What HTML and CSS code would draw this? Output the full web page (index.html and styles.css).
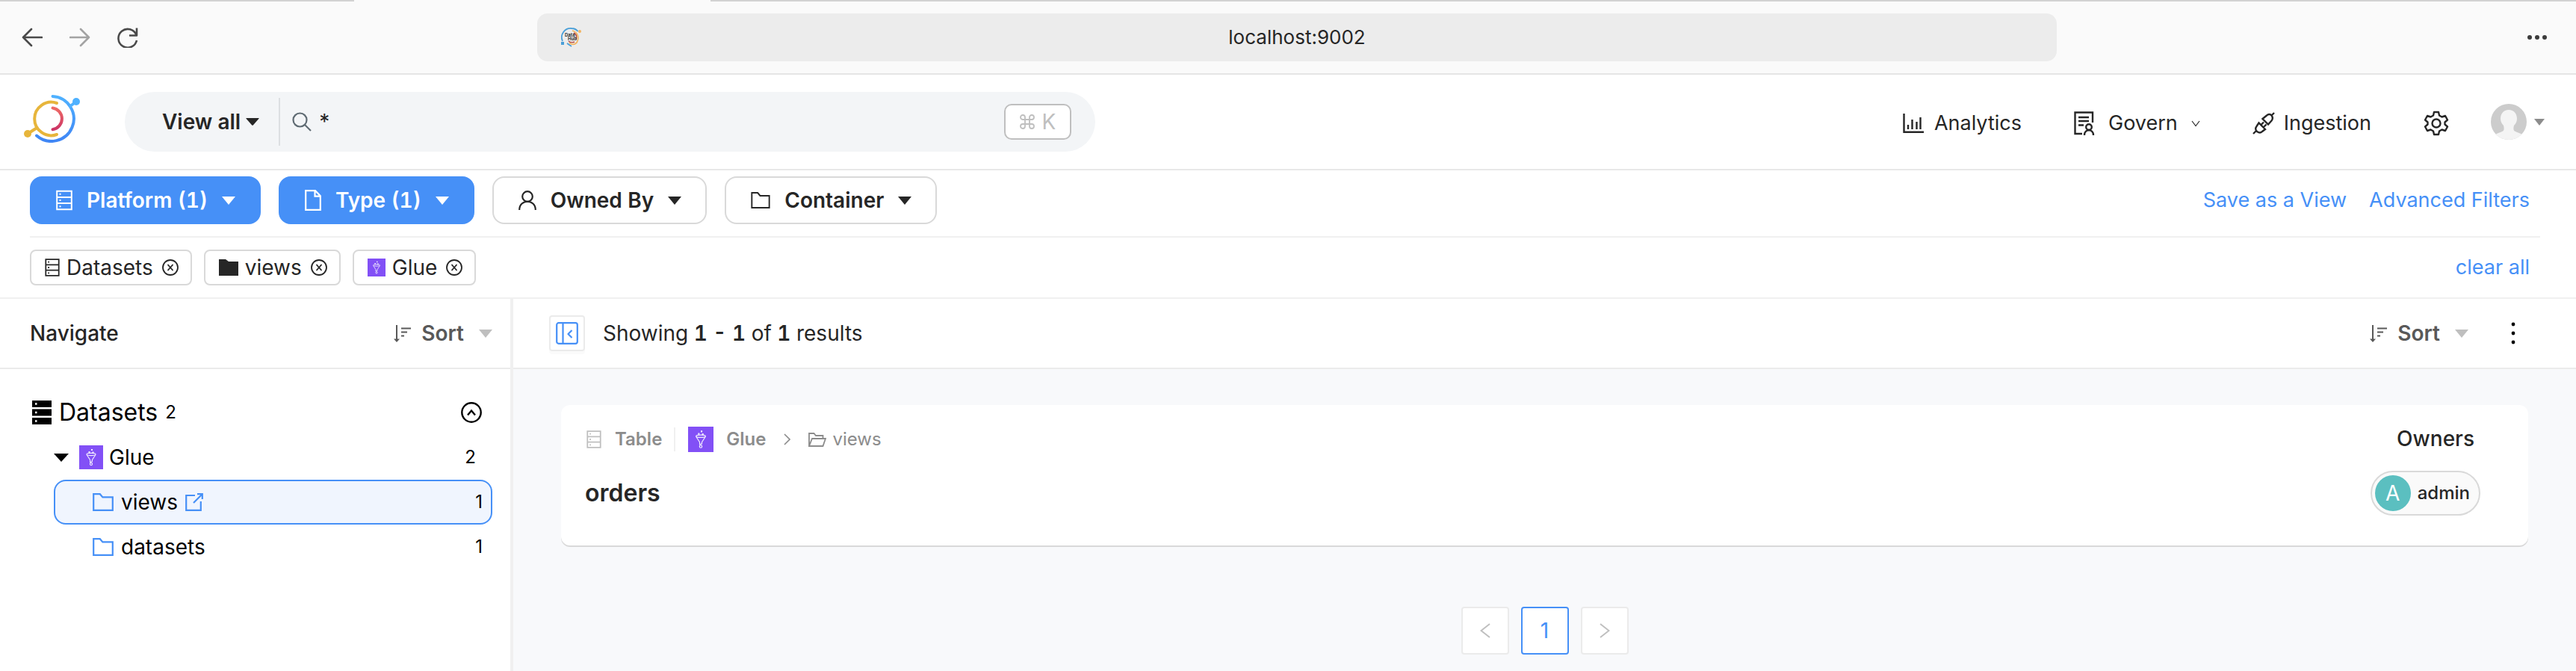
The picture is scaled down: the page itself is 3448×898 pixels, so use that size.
FILE: index.html
```html
<!DOCTYPE html>
<html lang="en">
<head>
<meta charset="utf-8">
<title>DataHub</title>
<link rel="stylesheet" href="styles.css">
</head>
<body>
<svg class="sprite" aria-hidden="true">
  <symbol id="caret" viewBox="0 0 18 11"><path d="M0 0h18L9 11z" fill="currentColor"/></symbol>
  <symbol id="db" viewBox="0 0 22 27"><path d="M1.2 1.2h19.6v24.6H1.2zM1.2 9.4h19.6M1.2 17.6h19.6" fill="none" stroke="currentColor" stroke-width="2"/><path d="M4.5 4.3h2v2h-2zM4.5 12.5h2v2h-2zM4.5 20.7h2v2h-2z" fill="currentColor"/></symbol>
  <symbol id="folder" viewBox="0 0 28 24"><path d="M1.2 1.2h8.6l3.6 4.2h13.4v17.4H1.2z" fill="none" stroke="currentColor" stroke-width="2.2"/></symbol>
  <symbol id="glue" viewBox="0 0 32 32"><path d="M0 0h32v32H0z" fill="#8250f6"/><g fill="none" stroke="#fff" stroke-width="1.1" opacity=".9"><ellipse cx="16" cy="12" rx="6" ry="1.6"/><path d="M10 12.5l4.6 7v3l2.8-1v-2l4.6-7"/><circle cx="16" cy="25" r="1.6"/></g><path d="M12.5 8h2v2h-2zM16 5h2v2h-2zM17.5 8.5h2v2h-2z" fill="#fff" opacity=".9"/></symbol>
  <symbol id="close" viewBox="0 0 22 22"><circle cx="11" cy="11" r="10" fill="none" stroke="currentColor" stroke-width="1.8"/><path d="M7.5 7l7 8M14.5 7l-7 8" stroke="currentColor" stroke-width="1.8"/></symbol>
  <symbol id="sort" viewBox="0 0 23 23"><path d="M4 0v20M10 4.5h13M10 9.5h8M10 14.5h4" fill="none" stroke="currentColor" stroke-width="2"/><path d="M0 18.500h8L4 23z" fill="currentColor"/></symbol>
</svg>

<div class="browser">
  <div class="tabs"><span class="tab-rest"></span><span class="tab-active"></span><span class="tab-rest tab-fill"></span></div>
  <div class="toolbar">
    <div class="nav-buttons">
      <button aria-label="Back"><svg width="28" height="26" viewBox="0 0 28 26"><path d="M13 2L2 13l11 11M2 13h25" fill="none" stroke="#4a4a4a" stroke-width="2.600" stroke-linecap="round" stroke-linejoin="round"/></svg></button>
      <button aria-label="Forward"><svg width="28" height="26" viewBox="0 0 28 26"><path d="M15 2l11 11-11 11M26 13H1" fill="none" stroke="#a3a3a3" stroke-width="2.600" stroke-linecap="round" stroke-linejoin="round"/></svg></button>
      <button aria-label="Reload"><svg width="28" height="28" viewBox="0 0 28 28"><path d="M26 1.500v10H16M25.500 11A12.400 12.400 0 1 0 26 18" fill="none" stroke="#4a4a4a" stroke-width="2.600" stroke-linejoin="round"/></svg></button>
    </div>
    <div class="address">
      <svg class="favicon" width="28" height="26" viewBox="0 0 28 26"><g fill="none"><path d="M14 1A12 12 0 0 0 2 18M8 21l6 4M14 1c4 0 7 2 8.500 4" stroke="#4a9fd8" stroke-width="1.800"/><path d="M15 4c7 2 10 9 6 16-3 3-7 3-10 0" stroke="#f3b562" stroke-width="1.800"/><path d="M17 7c4 2 4 6 3 9M10 18c2 2 6 2 8 1" stroke="#b5453a" stroke-width="1.400"/></g><path d="M0 19h4v4H0z" fill="#4a9fd8"/><circle cx="25" cy="5" r="2" fill="#f3b562"/><text x="5" y="12" class="fav-text">Data</text><text x="9" y="17" class="fav-text">Hub</text></svg>
      <span>localhost:9002</span>
    </div>
    <button class="more" aria-label="More"><svg width="26" height="6" viewBox="0 0 26 6" fill="#3c3c3c"><circle cx="3" cy="3" r="3"/><circle cx="13" cy="3" r="3"/><circle cx="23" cy="3" r="3"/></svg></button>
  </div>
</div>

<header class="header">
  <a class="logo" href="#" aria-label="Home"><svg width="78" height="64" viewBox="0 0 78 64"><defs><linearGradient id="lb" x1="0" y1="0" x2="0" y2="1"><stop offset="0" stop-color="#4fb1ff"/><stop offset="1" stop-color="#3f86f5"/></linearGradient><linearGradient id="lr" x1="0" y1="0" x2="0" y2="1"><stop offset="0" stop-color="#ee6a65"/><stop offset="1" stop-color="#cc3566"/></linearGradient></defs><g fill="none" stroke-width="4" stroke-linecap="round"><path d="M40.500 2A30 30 0 1 1 19 54.500" stroke="url(#lb)"/><path d="M64 15l8-6" stroke="#4fb1ff"/><path d="M46 11A22.300 22.300 0 1 0 46 53M19.500 44L7 52" stroke="#e7b53b"/><path d="M40.500 17.500A14.500 14.500 0 0 1 40.500 46.200" stroke="url(#lr)"/></g><circle cx="72" cy="9" r="5" fill="#4fb1ff"/><circle cx="7" cy="52" r="5" fill="#e7b53b"/></svg></a>
  <form class="search">
    <button type="button" class="view-all">View all <svg width="18" height="10" viewBox="0 0 18 10"><path d="M1 0h16q1 0 .5.800L10 9.300q-1 1-2 0L.500.800Q0 0 1 0z" fill="currentColor"/></svg></button>
    <label class="search-box"><svg width="26" height="26" viewBox="0 0 26 26" fill="none" stroke="#5f6b73" stroke-width="2.200"><circle cx="10.500" cy="10.500" r="9"/><path d="M17 17l8 8"/></svg><input type="text" value="*" aria-label="Search"></label>
    <kbd class="shortcut"><svg width="20" height="20" viewBox="0 0 20 20" fill="none" stroke="currentColor" stroke-width="1.800"><path d="M7 7h6v6H7zM7 7H4a3 3 0 1 1 3-3zM13 7V4a3 3 0 1 1 3 3zM13 13h3a3 3 0 1 1-3 3zM7 13v3a3 3 0 1 1-3-3z"/></svg>K</kbd>
  </form>
  <nav class="menu">
    <a href="#"><svg width="28" height="27" viewBox="0 0 28 27" fill="none" stroke="currentColor" stroke-width="2.400"><path d="M1.500 0v24.800H28M7 21v-6M12.500 21V8M18.500 21V11M23.500 21V5"/></svg>Analytics</a>
    <a href="#" class="govern"><svg width="28" height="32" viewBox="0 0 28 32" fill="none" stroke="currentColor" stroke-width="2.400"><path d="M11 30H1.500V1.500h23.500V15M6 8h14M6 13h14M6 18.500h7M14 32c0-9 12-9 12 0"/><circle cx="20" cy="21" r="3.800"/></svg>Govern<svg width="12" height="9" viewBox="0 0 12 9" fill="none" stroke="currentColor" stroke-width="1.200"><path d="M1 1l5 6.500L11 1"/></svg></a>
    <a href="#" class="ingest"><svg width="30" height="32" viewBox="0 0 30 32" fill="none" stroke="currentColor" stroke-width="2.400"><path d="M1 30l4-4M25 6l4-4M13.500 10l5.500-4.500c2-2 5-2 6.500 0s2 4.500 0 7L21 17.500zM17 24l-4 3c-2 2-5 1.500-7 0s-2.500-4.500-.5-7l3-4.500zM11 18.500l4-4M14.500 21.500l4-4"/></svg>Ingestion</a>
    <button aria-label="Settings"><svg width="34" height="34" viewBox="0 0 34 34" fill="none" stroke="currentColor" stroke-width="2.400" stroke-linejoin="round"><path d="M14 2h6l1 4.500 3.500 2 4.500-1.500 3 5.500-3.500 3v3l3.500 3-3 5.500-4.500-1.500-3.500 2-1 4.500h-6l-1-4.500-3.500-2L5 27l-3-5.500 3.500-3v-3L2 12.500 5 7l4.500 1.500 3.500-2z"/><circle cx="17" cy="17" r="5.500"/></svg></button>
    <button class="user" aria-label="Account"><svg width="48" height="48" viewBox="0 0 48 48"><defs><clipPath id="av"><circle cx="24" cy="24" r="24"/></clipPath></defs><g clip-path="url(#av)"><path d="M0 0h48v48H0z" fill="#ccc"/><path d="M24 8c7 0 11 5 11 12 0 4-2 7-4 9-1 4-1 7 2 8 4 2 7 2 10 5v8H5v-8c3-3 6-3 10-5 3-1 3-4 2-8-2-2-4-5-4-9 0-7 4-12 11-12z" fill="#f4f4f4"/></g></svg><svg width="14" height="9" viewBox="0 0 14 9"><path d="M0 0h14L7 9z" fill="#8c8c8c"/></svg></button>
  </nav>
</header>

<section class="filters">
  <div class="filter-row">
    <button class="filter active"><svg width="22" height="28"><use href="#db"/></svg>Platform (1)<svg class="caret" width="18" height="11"><use href="#caret"/></svg></button>
    <button class="filter active"><svg width="22" height="28" viewBox="0 0 22 28" fill="none" stroke="currentColor" stroke-width="2.200"><path d="M1.200 1.200H14l6.800 7v18.600H1.200zM13.500 1.200v7.500h7"/></svg>Type (1)<svg class="caret" width="18" height="11"><use href="#caret"/></svg></button>
    <button class="filter"><svg width="24" height="26" viewBox="0 0 24 26" fill="none" stroke="currentColor" stroke-width="2.200"><circle cx="12" cy="8" r="6.800"/><path d="M1.200 26c0-15 21.600-15 21.600 0"/></svg>Owned By<svg class="caret" width="18" height="11"><use href="#caret"/></svg></button>
    <button class="filter"><svg width="26" height="22" viewBox="0 0 28 24"><use href="#folder"/></svg>Container<svg class="caret" width="18" height="11"><use href="#caret"/></svg></button>
    <div class="links"><a href="#">Save as a View</a><a href="#">Advanced Filters</a></div>
  </div>
  <div class="chip-row">
    <span class="chip"><svg width="20" height="24"><use href="#db"/></svg>Datasets<button aria-label="Remove Datasets"><svg width="22" height="22"><use href="#close"/></svg></button></span>
    <span class="chip"><svg width="26" height="22" viewBox="0 0 26 22"><path d="M0 0h9l4 3h13v19H0z" fill="currentColor"/></svg>views<button aria-label="Remove views"><svg width="22" height="22"><use href="#close"/></svg></button></span>
    <span class="chip"><svg width="24" height="24"><use href="#glue"/></svg>Glue<button aria-label="Remove Glue"><svg width="22" height="22"><use href="#close"/></svg></button></span>
    <div class="links"><a href="#">clear all</a></div>
  </div>
</section>

<div class="body">
  <aside class="sidebar">
    <div class="bar side-bar">
      <h2>Navigate</h2>
      <button class="sort"><svg width="23" height="23"><use href="#sort"/></svg>Sort<svg class="caret" width="18" height="11"><use href="#caret"/></svg></button>
    </div>
    <div class="tree">
      <div class="root"><svg width="26" height="32" viewBox="0 0 26 32"><path d="M0 0h26v9H0zM0 11.500h26v9H0zM0 23h26v9H0z"/><path d="M4 3.200h2.500v2.500H4zM4 14.700h2.500v2.500H4zM4 26.200h2.500v2.500H4z" fill="#fff"/></svg><span>Datasets</span><small>2</small>
        <button aria-label="Collapse"><svg width="28" height="28" viewBox="0 0 28 28" fill="none" stroke="#000" stroke-width="2.400"><circle cx="14" cy="14" r="12.700"/><path d="M9 17.500l5-6 5 6"/></svg></button></div>
      <div class="platform"><svg width="20" height="11" viewBox="0 0 20 11"><path d="M0 0h20L10 11z"/></svg><svg width="32" height="32"><use href="#glue"/></svg><span>Glue</span><small>2</small></div>
      <div class="node selected"><svg class="blue" width="28" height="24"><use href="#folder"/></svg><span>views</span><svg class="blue" width="24" height="24" viewBox="0 0 24 24" fill="none" stroke="currentColor" stroke-width="2.200"><path d="M13 3H1.200v19.800h19.600V11M11 13L22 2M16 1.200h6.800V8"/></svg><small>1</small></div>
      <div class="node"><svg class="blue" width="28" height="24"><use href="#folder"/></svg><span>datasets</span><small>1</small></div>
    </div>
  </aside>
  <main class="main">
    <div class="bar main-bar">
      <button class="collapse" aria-label="Hide navigation"><svg width="30" height="30" viewBox="0 0 30 30" fill="none" stroke="#4690f7" stroke-width="2.200" stroke-linejoin="round"><rect x="1.200" y="1.200" width="27.600" height="27.600" rx="2.500"/><path d="M9.500 1v28M21.500 11l-5 5 5 5"/></svg></button>
      <p>Showing <b>1 - 1</b> of <b>1</b> results</p>
      <button class="sort"><svg width="23" height="23"><use href="#sort"/></svg>Sort<svg class="caret" width="18" height="11"><use href="#caret"/></svg></button>
      <button class="dots" aria-label="Options"><svg width="6" height="30" viewBox="0 0 6 30"><circle cx="3" cy="3" r="2.400"/><circle cx="3" cy="15" r="2.400"/><circle cx="3" cy="27" r="2.400"/></svg></button>
    </div>
    <div class="results">
      <article class="card">
        <div class="card-main">
          <div class="path"><svg class="table-icon" width="20" height="24"><use href="#db"/></svg><strong class="kind">Table</strong><svg class="glue-icon" width="34" height="34"><use href="#glue"/></svg><strong>Glue</strong><svg class="sep" width="9" height="16" viewBox="0 0 9 16" fill="none" stroke="currentColor" stroke-width="1.600"><path d="M1 1l7 7-7 7"/></svg><svg width="24" height="19" viewBox="0 0 24 19" fill="none" stroke="currentColor" stroke-width="1.800"><path d="M1 18V1h6.500l2.500 3h9.500v4M1 18L5 8h18l-3.500 10z"/></svg><span class="crumb">views</span></div>
          <h3><a href="#">orders</a></h3>
        </div>
        <div class="owners"><h4>Owners</h4><a href="#" class="owner"><span class="initial">A</span>admin</a></div>
      </article>
      <nav class="pages" aria-label="Pages">
        <button aria-label="Previous"><svg width="14" height="20" viewBox="0 0 14 20"><path d="M13 1L1.500 10 13 19" fill="none" stroke="#bfbfbf" stroke-width="2"/></svg></button>
        <button class="current">1</button>
        <button aria-label="Next"><svg width="14" height="20" viewBox="0 0 14 20"><path d="M1 1l11.500 9L1 19" fill="none" stroke="#bfbfbf" stroke-width="2"/></svg></button>
      </nav>
    </div>
  </main>
</div>
</body>
</html>
```
FILE: styles.css
```css
* { box-sizing: border-box; }
body {
  margin: 0;
  min-height: 100vh;
  display: flex;
  flex-direction: column;
  background: #fff;
  color: #262626;
  font: 400 28px/32px Inter, "Liberation Sans", sans-serif;
}
svg { display: block; flex: none; }
a { color: inherit; text-decoration: none; }
button { font: inherit; color: inherit; background: none; border: 0; padding: 0; }
h2, h3, h4, p { margin: 0; }
small { font-size: 24px; }
.sprite { position: absolute; width: 0; height: 0; }

.browser { background: #fafafa; border-bottom: 2px solid #e5e5e5; }
.tabs { display: flex; height: 2px; }
.tab-rest { width: 474px; background: #d2d2d2; }
.tab-active { width: 477px; }
.tab-fill { flex: 1; }
.toolbar { display: flex; align-items: center; padding: 16px 39px 16px 29px; }
.nav-buttons { display: flex; align-items: center; gap: 36px; width: 690px; }
.address {
  flex: 1;
  display: flex;
  align-items: center;
  height: 64px;
  border-radius: 14px;
  background: #ececec;
  padding: 0 32px;
  font-size: 26px;
}
.address span { flex: 1; text-align: center; padding-right: 28px; }
.fav-text { font: 700 6px Inter, sans-serif; fill: #333; }
.more { display: flex; justify-content: flex-end; width: 656px; }

.header {
  display: flex;
  align-items: center;
  height: 128px;
  padding: 0 42px 0 30px;
  border-bottom: 2px solid #e8e8e8;
}
.logo { width: 137px; padding-bottom: 8px; }
.search {
  display: flex;
  align-items: center;
  width: 1299px;
  height: 80px;
  border-radius: 40px;
  background: #f3f5f7;
  padding: 0 32px 0 50px;
}
.view-all {
  display: flex;
  align-items: center;
  gap: 7px;
  height: 64px;
  padding-right: 26px;
  border-right: 2px solid #dcdfe2;
  font-weight: 600;
}
.search-box { flex: 1; display: flex; align-items: center; gap: 10px; padding-left: 16px; }
.search-box input { flex: 1; border: 0; padding: 0; background: none; font: inherit; color: inherit; outline: 0; }
.shortcut {
  display: flex;
  align-items: center;
  justify-content: center;
  gap: 10px;
  width: 90px;
  height: 48px;
  border: 2px solid #bfbfbf;
  border-radius: 10px;
  background: #fff;
  color: #bfbfbf;
  font: inherit;
}
.menu { display: flex; align-items: center; gap: 70px; margin-left: auto; padding-top: 4px; font-size: 27px; }
.menu a { display: flex; align-items: center; gap: 14px; }
.menu .govern { gap: 18px; }
.menu .ingest { gap: 12px; }
.user { display: flex; align-items: center; gap: 10px; margin-left: -14px; padding-bottom: 4px; }

.filters { padding: 8px 48px 16px 40px; border-bottom: 2px solid #f0f0f0; }
.filter-row, .chip-row { display: flex; align-items: center; }
.filter-row { gap: 24px; padding-bottom: 16px; border-bottom: 2px solid #f0f0f0; }
.filter {
  display: flex;
  align-items: center;
  gap: 19px;
  height: 64px;
  padding: 0 32px 0 33px;
  border: 2px solid #d9d9d9;
  border-radius: 16px;
  font-weight: 600;
  font-variant-numeric: tabular-nums;
}
.filter.active { background: #4690f7; border-color: #4690f7; color: #fff; }
.links { display: flex; gap: 30px; margin-left: auto; padding-right: 14px; color: #4690f7; font-size: 27px; }
.chip-row { gap: 16px; padding-top: 16px; }
.chip {
  display: flex;
  align-items: center;
  gap: 9px;
  height: 48px;
  padding: 0 16px 0 18px;
  border: 2px solid #d9d9d9;
  border-radius: 8px;
}
.chip button { padding-left: 3px; }

.body { flex: 1; display: flex; }
.sidebar { width: 687px; border-right: 4px solid #f0f0f0; }
.main { flex: 1; display: flex; flex-direction: column; }
.bar { display: flex; align-items: center; height: 94px; border-bottom: 2px solid #ebebeb; }
.side-bar { padding: 0 24px 0 40px; }
.side-bar h2 { font-size: 28px; font-weight: 500; }
.sort { display: flex; align-items: center; gap: 14px; margin-left: auto; font-weight: 600; color: #595959; }
.sort .caret { margin-left: 6px; color: #bfbfbf; }
.main-bar { padding: 0 81px 0 48px; }
.main-bar p { padding-left: 24px; font-variant-numeric: tabular-nums; }
.main-bar b { font-weight: 600; }
.collapse {
  display: grid;
  place-items: center;
  width: 48px;
  height: 48px;
  border: 2px solid #ebebeb;
  border-radius: 4px;
  box-shadow: 0 4px 0 rgba(0, 0, 0, 0.02);
}
.dots { margin-left: 57px; }

.tree { padding: 28px 24px 0 43px; color: #000; }
.root, .platform, .node { display: flex; align-items: center; height: 60px; }
.tree small { margin-left: auto; }
.root { gap: 10px; font-size: 32px; padding-right: 14px; }
.root small { margin: 0; }
.root button { margin-left: auto; }
.platform { padding: 0 22px 0 29px; gap: 8px; }
.platform svg:first-child { margin-right: 6px; }
.node { margin-left: 29px; padding: 0 11px 0 50px; gap: 10px; border: 2px solid transparent; border-radius: 16px; }
.selected { border-color: #4690f7; background: #f0f5fe; }
.blue { color: #4690f7; }

.results { flex: 1; padding: 48px 64px 20px; background: #f8f9fb; }
.card {
  display: flex;
  justify-content: space-between;
  min-height: 188px;
  padding: 28px 64px 40px 32px;
  border-radius: 12px;
  background: #fff;
  box-shadow: 0 2px 0 #d9d9d9;
}
.path { display: flex; align-items: center; height: 36px; font-size: 24px; color: #8c8c8c; }
.path strong { font-weight: 600; }
.table-icon { margin: 0 18px 0 2px; color: #bfbfbf; }
.kind { padding-right: 16px; margin-right: 17px; border-right: 2px solid #f0f0f0; }
.glue-icon { margin-right: 17px; }
.sep { margin: 0 24px; }
.crumb { padding-left: 8px; }
.card h3 { padding-top: 34px; font-size: 32px; line-height: 40px; font-weight: 600; }
.owners { display: flex; flex-direction: column; align-items: flex-end; gap: 26px; }
.owners h4 { padding-right: 8px; font-size: 28px; font-weight: 500; line-height: 34px; }
.owner {
  display: flex;
  align-items: center;
  gap: 9px;
  height: 60px;
  padding: 0 12px 0 4px;
  border: 2px solid #d9d9d9;
  border-radius: 30px;
  background: #fafafa;
  font-size: 24px;
  font-weight: 500;
}
.initial {
  display: grid;
  place-items: center;
  width: 48px;
  height: 48px;
  border-radius: 50%;
  background: #5bbfc0;
  color: #fff;
  font-size: 28px;
  font-weight: 400;
}
.pages { display: flex; justify-content: center; gap: 16px; padding-top: 82px; }
.pages button {
  display: grid;
  place-items: center;
  width: 64px;
  height: 64px;
  border: 2px solid #ebebeb;
  border-radius: 4px;
  background: #fff;
}
.pages .current { border-color: #4690f7; color: #4690f7; }
```
